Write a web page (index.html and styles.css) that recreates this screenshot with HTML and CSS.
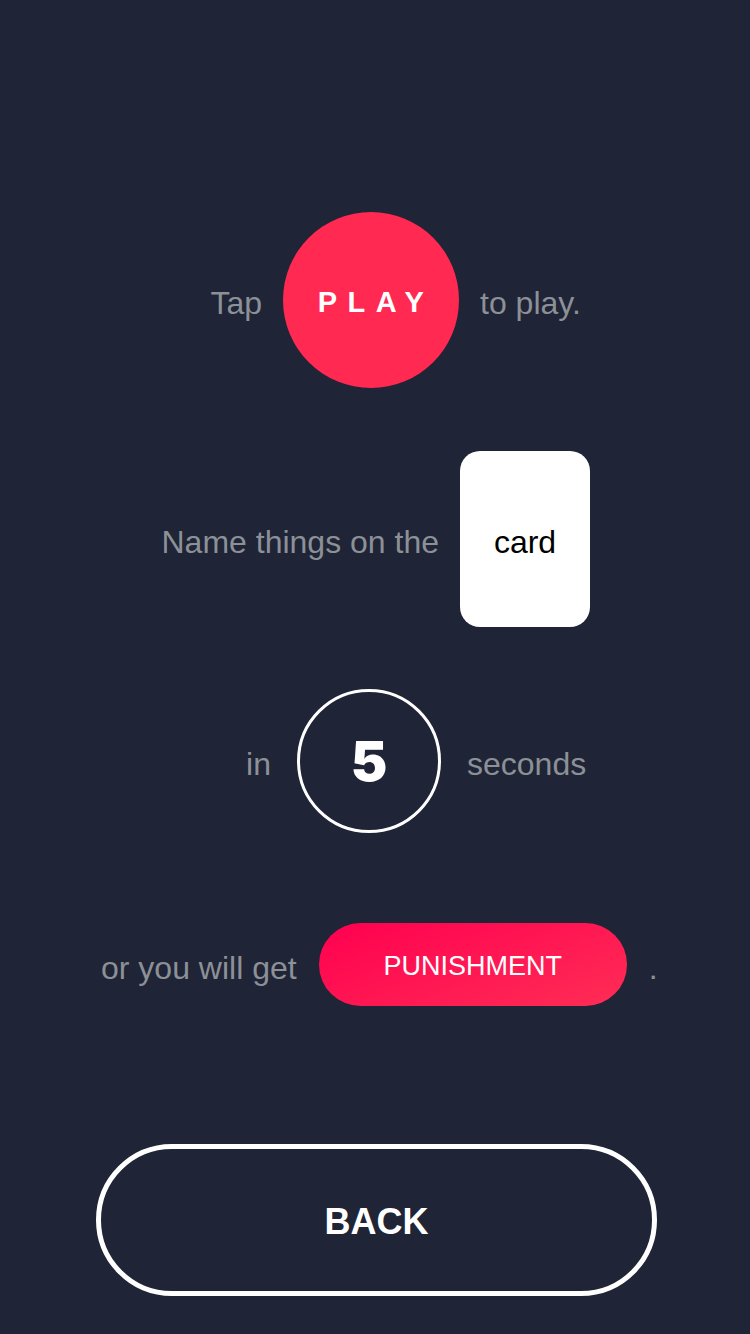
FILE: index.html
```html
<!DOCTYPE html>
<html lang="en">
<head>
<meta charset="utf-8">
<title>How to play</title>
<link rel="stylesheet" href="styles.css">
</head>
<body>
<main class="screen">
  <div class="row row-play">
    <span class="label label-left">Tap</span>
    <div class="play-circle"><span class="play-text">PLAY</span></div>
    <span class="label">to play.</span>
  </div>
  <div class="row row-card">
    <span class="label">Name things on the</span>
    <div class="card"><span class="card-text">card</span></div>
  </div>
  <div class="row row-time">
    <span class="label label-left">in</span>
    <div class="timer">5</div>
    <span class="label">seconds</span>
  </div>
  <div class="row row-punish">
    <span class="label">or you will get</span>
    <div class="punish"><span class="punish-text">PUNISHMENT</span></div>
    <span class="label">.</span>
  </div>
  <button class="back"><span class="back-text">BACK</span></button>
</main>
</body>
</html>
```

FILE: styles.css
```css
html, body {
  margin: 0;
  padding: 0;
  background: #1f2436;
}

.screen {
  width: 750px;
  height: 1334px;
  box-sizing: border-box;
  padding-top: 212px;
  display: flex;
  flex-direction: column;
  font-family: "Liberation Sans", Arial, sans-serif;
}

.label {
  font-size: 32px;
  color: #8c9097;
  white-space: nowrap;
  padding-top: 7px;
}

.label-left {
  text-align: right;
}

.row {
  align-items: center;
}

.row-play {
  display: grid;
  grid-template-columns: 1fr auto 1fr;
  column-gap: 21px;
  padding-right: 8px;
}

.play-circle {
  width: 176px;
  height: 176px;
  border-radius: 50%;
  background: #ff2952;
  display: flex;
  align-items: center;
  justify-content: center;
}

.play-text {
  color: #fff;
  font-weight: 700;
  font-size: 29px;
  letter-spacing: 10.5px;
  padding-left: 10px;
  padding-top: 4px;
}

.row-card {
  display: flex;
  justify-content: flex-end;
  gap: 21px;
  padding-right: 160px;
  margin-top: 63px;
}

.card {
  width: 130px;
  height: 176px;
  border-radius: 20px;
  background: #fff;
  display: flex;
  align-items: center;
  justify-content: center;
}

.card-text {
  color: #000;
  font-size: 32px;
  padding-top: 6px;
}

.row-time {
  display: grid;
  grid-template-columns: 1fr auto 1fr;
  column-gap: 26px;
  padding-right: 12px;
  margin-top: 62px;
}

.timer {
  width: 144px;
  height: 144px;
  box-sizing: border-box;
  border: 3px solid #fff;
  border-radius: 50%;
  display: flex;
  align-items: center;
  justify-content: center;
  color: #fff;
  font-family: Inter, "Liberation Sans", sans-serif;
  font-weight: 900;
  font-size: 55px;
}

.row-punish {
  display: flex;
  justify-content: flex-start;
  gap: 22px;
  padding-left: 101px;
  margin-top: 90px;
}

.punish {
  width: 308px;
  height: 83px;
  border-radius: 42px;
  background: linear-gradient(160deg, #ff0050 0%, #ff2d55 100%);
  display: flex;
  align-items: center;
  justify-content: center;
}

.punish-text {
  color: #fff;
  font-size: 27px;
  padding-top: 3px;
}

.back {
  margin: 138px 0 0 96px;
  width: 561px;
  height: 152px;
  box-sizing: border-box;
  border: 5px solid #fff;
  border-radius: 76px;
  background: transparent;
  padding: 0;
  display: flex;
  align-items: center;
  justify-content: center;
}

.back-text {
  color: #fff;
  font-family: "Liberation Sans", Arial, sans-serif;
  font-weight: 700;
  font-size: 36px;
  padding-top: 4px;
}
```
